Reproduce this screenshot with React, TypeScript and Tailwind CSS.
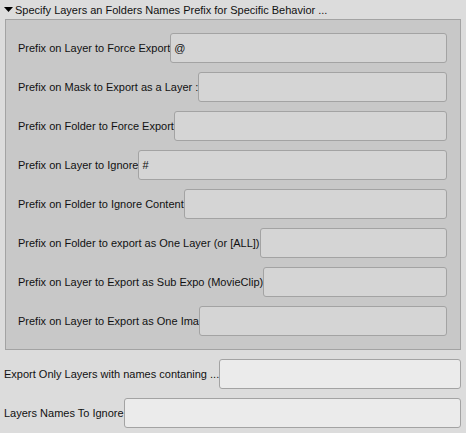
import React from "react";

const panelRows: { label: string; value?: string }[] = [
  { label: "Prefix on Layer to Force Export", value: "@" },
  { label: "Prefix on Mask to Export as a Layer :" },
  { label: "Prefix on Folder to Force Export" },
  { label: "Prefix on Layer to Ignore", value: "#" },
  { label: "Prefix on Folder to Ignore Content" },
  { label: "Prefix on Folder to export as One Layer (or [ALL])" },
  { label: "Prefix on Layer to Export as Sub Expo (MovieClip)" },
  { label: "Prefix on Layer to Export as One Ima" },
];

const FieldRow: React.FC<{ label: string; value?: string; inner?: boolean }> = ({
  label,
  value,
  inner,
}) => (
  <div className="flex items-center h-[30px]">
    <span className="whitespace-nowrap">{label}</span>
    <div
      className={`flex-1 h-[30px] flex items-center px-[3px] border border-[#a3a3a3] rounded-[3px] ${
        inner ? "bg-[#d5d5d5]" : "bg-[#ebebeb]"
      }`}
    >
      {value}
    </div>
  </div>
);

export default function App() {
  return (
    <div
      className="w-[466px] h-[433px] bg-[#dcdcdc] text-[11px] text-[#111] pl-[4px] pr-[5px] pt-[3px]"
      style={{ fontFamily: '"Liberation Sans", Arial, sans-serif' }}
    >
      <div className="flex items-center h-[14px]">
        <svg width="10" height="6" viewBox="0 0 10 6" className="mr-[1px]">
          <polygon points="0,0 9,0 4.5,5" fill="#000" />
        </svg>
        <span>Specify Layers an Folders Names Prefix for Specific Behavior ...</span>
      </div>
      <div className="mt-[2px] ml-[1px] border border-[#a3a3a3] bg-[#c8c8c8] pl-[12px] pr-[13px] py-[13px] flex flex-col gap-[9px]">
        {panelRows.map((row, idx) => (
          <FieldRow key={idx} label={row.label} value={row.value} inner />
        ))}
      </div>
      <div className="mt-[9px] flex flex-col gap-[9px]">
        <FieldRow label="Export Only Layers with names contaning ..." />
        <FieldRow label="Layers Names To Ignore" />
      </div>
    </div>
  );
}
